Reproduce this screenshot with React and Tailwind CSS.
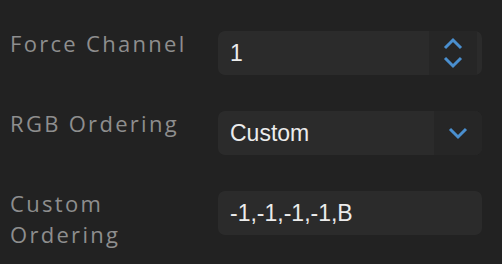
const labelCls =
  "w-[208px] shrink-0 text-[22px] leading-[31px] tracking-[2.3px] text-[#8e8e8e] font-['Open_Sans',sans-serif]";
const valueCls =
  "text-[23px] text-[#ececec] font-['Liberation_Sans',Arial,sans-serif] leading-none";

function Chevron({ up = false, className = "" }) {
  return (
    <svg width="20" height="13" viewBox="0 0 20 13" className={className}>
      <path
        d={up ? "M2 11 L10 3 L18 11" : "M2 2 L10 10 L18 2"}
        fill="none"
        stroke="#4a8fcf"
        strokeWidth="3"
      />
    </svg>
  );
}

function Row({ label, children }) {
  return (
    <div className="flex items-start">
      <div className={labelCls}>{label}</div>
      <div className="flex-1 mt-[3px]">{children}</div>
    </div>
  );
}

export default function App() {
  return (
    <div className="w-[502px] h-[264px] bg-[#222222] pl-[10px] pr-[20px] pt-[28px] flex flex-col gap-[33px] overflow-hidden">
      <Row label="Force Channel">
        <div className="h-[44px] rounded-[7px] bg-[#2b2b2b] flex items-stretch pr-[5px]">
          <div className={`flex-1 flex items-center pl-[12px] ${valueCls}`}>1</div>
          <div className="w-[48px] bg-[#262626] flex flex-col items-center justify-center gap-[6px]">
            <Chevron up />
            <Chevron />
          </div>
        </div>
      </Row>
      <Row label="RGB Ordering">
        <div className="h-[44px] rounded-[7px] bg-[#2b2b2b] flex items-stretch overflow-hidden">
          <div className={`flex-1 flex items-center pl-[12px] ${valueCls}`}>Custom</div>
          <div className="w-[48px] bg-[#262626] flex items-center justify-center">
            <Chevron />
          </div>
        </div>
      </Row>
      <Row label={<>Custom<br />Ordering</>}>
        <div className={`h-[44px] rounded-[7px] bg-[#2b2b2b] flex items-center pl-[12px] ${valueCls}`}>
          -1,-1,-1,-1,B
        </div>
      </Row>
    </div>
  );
}
